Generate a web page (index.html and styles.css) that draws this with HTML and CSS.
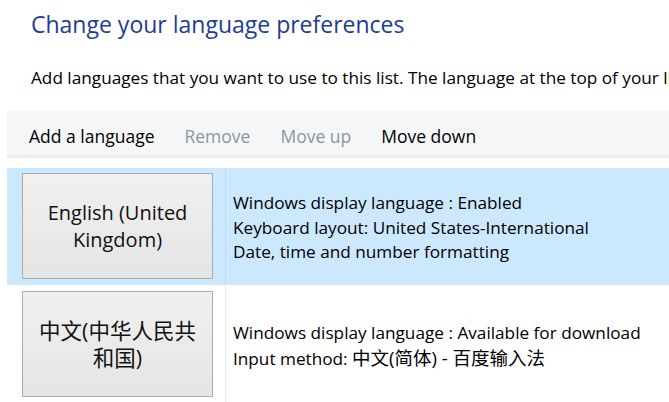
FILE: index.html
```html
<!DOCTYPE html>
<html>
<head>
<meta charset="utf-8">
<link rel="stylesheet" href="styles.css">
</head>
<body>
<h1 class="title">Change your language preferences</h1>
<p class="desc">Add languages that you want to use to this list. The language at the top of your list is your primary language.</p>
<div class="toolbar">
  <span class="tool">Add a language</span>
  <span class="tool disabled">Remove</span>
  <span class="tool disabled">Move up</span>
  <span class="tool">Move down</span>
</div>
<div class="list">
  <div class="row selected">
    <div class="cell-left"><div class="lang-btn">English (United Kingdom)</div></div>
    <div class="cell-right">
      <div>Windows display language : Enabled</div>
      <div>Keyboard layout: United States-International</div>
      <div>Date, time and number formatting</div>
    </div>
  </div>
  <div class="row">
    <div class="cell-left"><div class="lang-btn cjk-btn">中文(中华人民共和国)</div></div>
    <div class="cell-right">
      <div>Windows display language : Available for download</div>
      <div>Input method: <span class="cjk">中文(简体) - 百度输入法</span></div>
    </div>
  </div>
</div>
</body>
</html>
```
FILE: styles.css
```css
html, body {
  margin: 0;
  padding: 0;
  background: #ffffff;
  overflow: hidden;
}
body {
  font-family: "Open Sans", "Noto Sans CJK SC", sans-serif;
  color: #000;
  width: 669px;
  height: 402px;
}
.title {
  margin: 0;
  padding: 9px 0 0 31px;
  font-size: 23px;
  font-weight: normal;
  line-height: 30px;
  color: #1e3c94;
  white-space: nowrap;
}
.desc {
  margin: 0;
  padding: 28px 0 0 31px;
  font-size: 17.2px;
  line-height: 22px;
  white-space: nowrap;
  overflow: hidden;
}
.toolbar {
  margin: 22px 0 0 7px;
  height: 44px;
  box-sizing: content-box;
  background: #f5f6f7;
  border-bottom: 3px solid #ececee;
  display: flex;
  align-items: center;
  padding: 6px 0 0 22px;
  height: 38px;
  gap: 30px;
  font-size: 17.5px;
}
.tool.disabled {
  color: #8a96a4;
}
.list {
  margin: 10px 0 0 7px;
}
.row {
  display: flex;
  height: 117px;
  margin-bottom: 1px;
}
.row.selected {
  background: #cce8ff;
}
.cell-left {
  width: 219px;
  border-right: 1px solid #e3eaf1;
  box-sizing: border-box;
  padding: 5px 0 0 15px;
}
.row.selected .cell-left {
  border-right-color: #b7dbf7;
}
.lang-btn {
  width: 191px;
  height: 106px;
  box-sizing: border-box;
  border: 1px solid #acacac;
  background: linear-gradient(#f0f0f0, #e5e5e5);
  display: flex;
  align-items: center;
  justify-content: center;
  text-align: center;
  font-size: 20px;
  line-height: 27px;
  padding: 0 16px;
  color: #111;
}
.lang-btn.cjk-btn {
  font-size: 21.5px;
  padding: 0 12px;
}
.cell-right {
  display: flex;
  flex-direction: column;
  justify-content: center;
  padding: 3px 0 0 7px;
  font-size: 17.2px;
  line-height: 24.5px;
  white-space: nowrap;
}
.cjk {
  font-size: 18.5px;
}
```
